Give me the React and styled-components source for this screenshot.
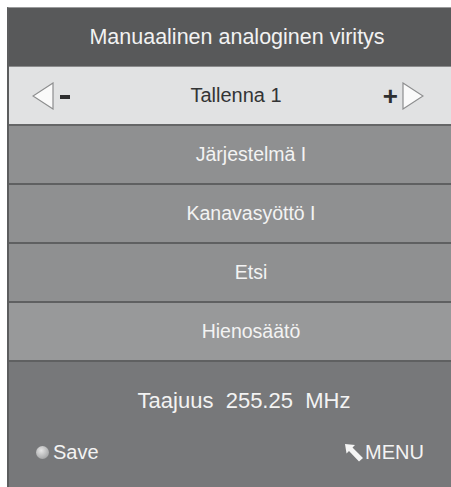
import React from "react";
import styled, { createGlobalStyle } from "styled-components";

const GlobalStyle = createGlobalStyle`
  html, body {
    margin: 0;
    padding: 0;
    background: #ffffff;
    overflow: hidden;
  }
  body {
    font-family: "Liberation Sans", Arial, sans-serif;
  }
`;

const Page = styled.div`
  padding: 7px 0 0 7px;
`;

const Panel = styled.div`
  width: 444px;
  height: 480px;
  display: flex;
  flex-direction: column;
  border-left: 2px solid #5c5d5e;
  border-top: 1px solid #9a9b9c;
  box-sizing: border-box;
`;

const Header = styled.div`
  height: 58px;
  background: #58595a;
  color: #f2f2f2;
  font-size: 21.5px;
  display: flex;
  align-items: center;
  justify-content: center;
  padding-left: 14px;
`;

const Selector = styled.div`
  height: 57px;
  background: #e1e2e3;
  border-top: 1px solid #8a8b8c;
  border-bottom: 2px solid #656667;
  display: grid;
  grid-template-columns: 90px 1fr 90px;
  align-items: center;
  color: #333435;
  font-size: 20px;
`;

const Arrow = styled.div`
  display: flex;
  align-items: center;
  justify-content: ${(p) => (p.right ? "flex-end" : "flex-start")};
  gap: ${(p) => (p.right ? "4px" : "6px")};
  padding: ${(p) => (p.right ? "0 27px 0 0" : "0 0 0 23px")};
`;

const Label = styled.div`
  text-align: center;
  padding-left: 12px;
`;

const Plus = styled.span`
  font-size: 26px;
  font-weight: bold;
  color: #2e2f30;
  line-height: 1;
`;

const Minus = styled.span`
  width: 10px;
  height: 4px;
  background: #2e2f30;
  margin-top: 2px;
`;

const Row = styled.div`
  height: 57px;
  background: ${(p) => p.bg || "#8f9091"};
  border-bottom: 2px solid #5f6061;
  color: #f3f3f3;
  font-size: 19.5px;
  display: flex;
  align-items: center;
  justify-content: center;
  padding-left: 42px;
`;

const Footer = styled.div`
  flex: 1;
  background: #77787a;
  color: #f3f3f3;
  display: flex;
  flex-direction: column;
`;

const Freq = styled.div`
  height: 78px;
  display: flex;
  align-items: center;
  justify-content: center;
  font-size: 22px;
  white-space: pre;
  padding-left: 28px;
`;

const Bar = styled.div`
  display: flex;
  justify-content: space-between;
  align-items: center;
  padding: 1px 27px 0 27px;
  font-size: 20px;
`;

const Hint = styled.div`
  display: flex;
  align-items: center;
  gap: ${(p) => p.gap || "3px"};
`;

const Dot = styled.span`
  width: 13px;
  height: 13px;
  border-radius: 50%;
  background: radial-gradient(circle at 40% 35%, #e6e6e6, #a9aaab 70%, #8c8d8e);
`;

const Triangle = ({ dir }) => (
  <svg width="22" height="28" viewBox="0 0 22 28">
    {dir === "left" ? (
      <polygon points="21,1 21,27 1,14" fill="#fafafa" stroke="#8d8e8f" strokeWidth="1.2" />
    ) : (
      <polygon points="1,1 1,27 21,14" fill="#fafafa" stroke="#8d8e8f" strokeWidth="1.2" />
    )}
  </svg>
);

const MenuArrow = () => (
  <svg width="20" height="19" viewBox="0 0 20 19">
    <path d="M1 1 L11 2 L8.5 4.5 L19 15 L15 18.5 L5 8 L2.5 10.5 Z" fill="#f5f5f5" />
  </svg>
);

const items = ["Järjestelmä I", "Kanavasyöttö I", "Etsi"];

const App = () => {
  return (
    <Page>
      <GlobalStyle />
      <Panel>
        <Header>Manuaalinen analoginen viritys</Header>
        <Selector>
          <Arrow>
            <Triangle dir="left" />
            <Minus />
          </Arrow>
          <Label>Tallenna 1</Label>
          <Arrow right>
            <Plus>+</Plus>
            <Triangle dir="right" />
          </Arrow>
        </Selector>
        {items.map((item) => (
          <Row key={item}>{item}</Row>
        ))}
        <Row bg="#98999a">Hienosäätö</Row>
        <Footer>
          <Freq>Taajuus  255.25  MHz</Freq>
          <Bar>
            <Hint gap="4px">
              <Dot />
              Save
            </Hint>
            <Hint gap="1px">
              <MenuArrow />
              MENU
            </Hint>
          </Bar>
        </Footer>
      </Panel>
    </Page>
  );
};

export default App;
